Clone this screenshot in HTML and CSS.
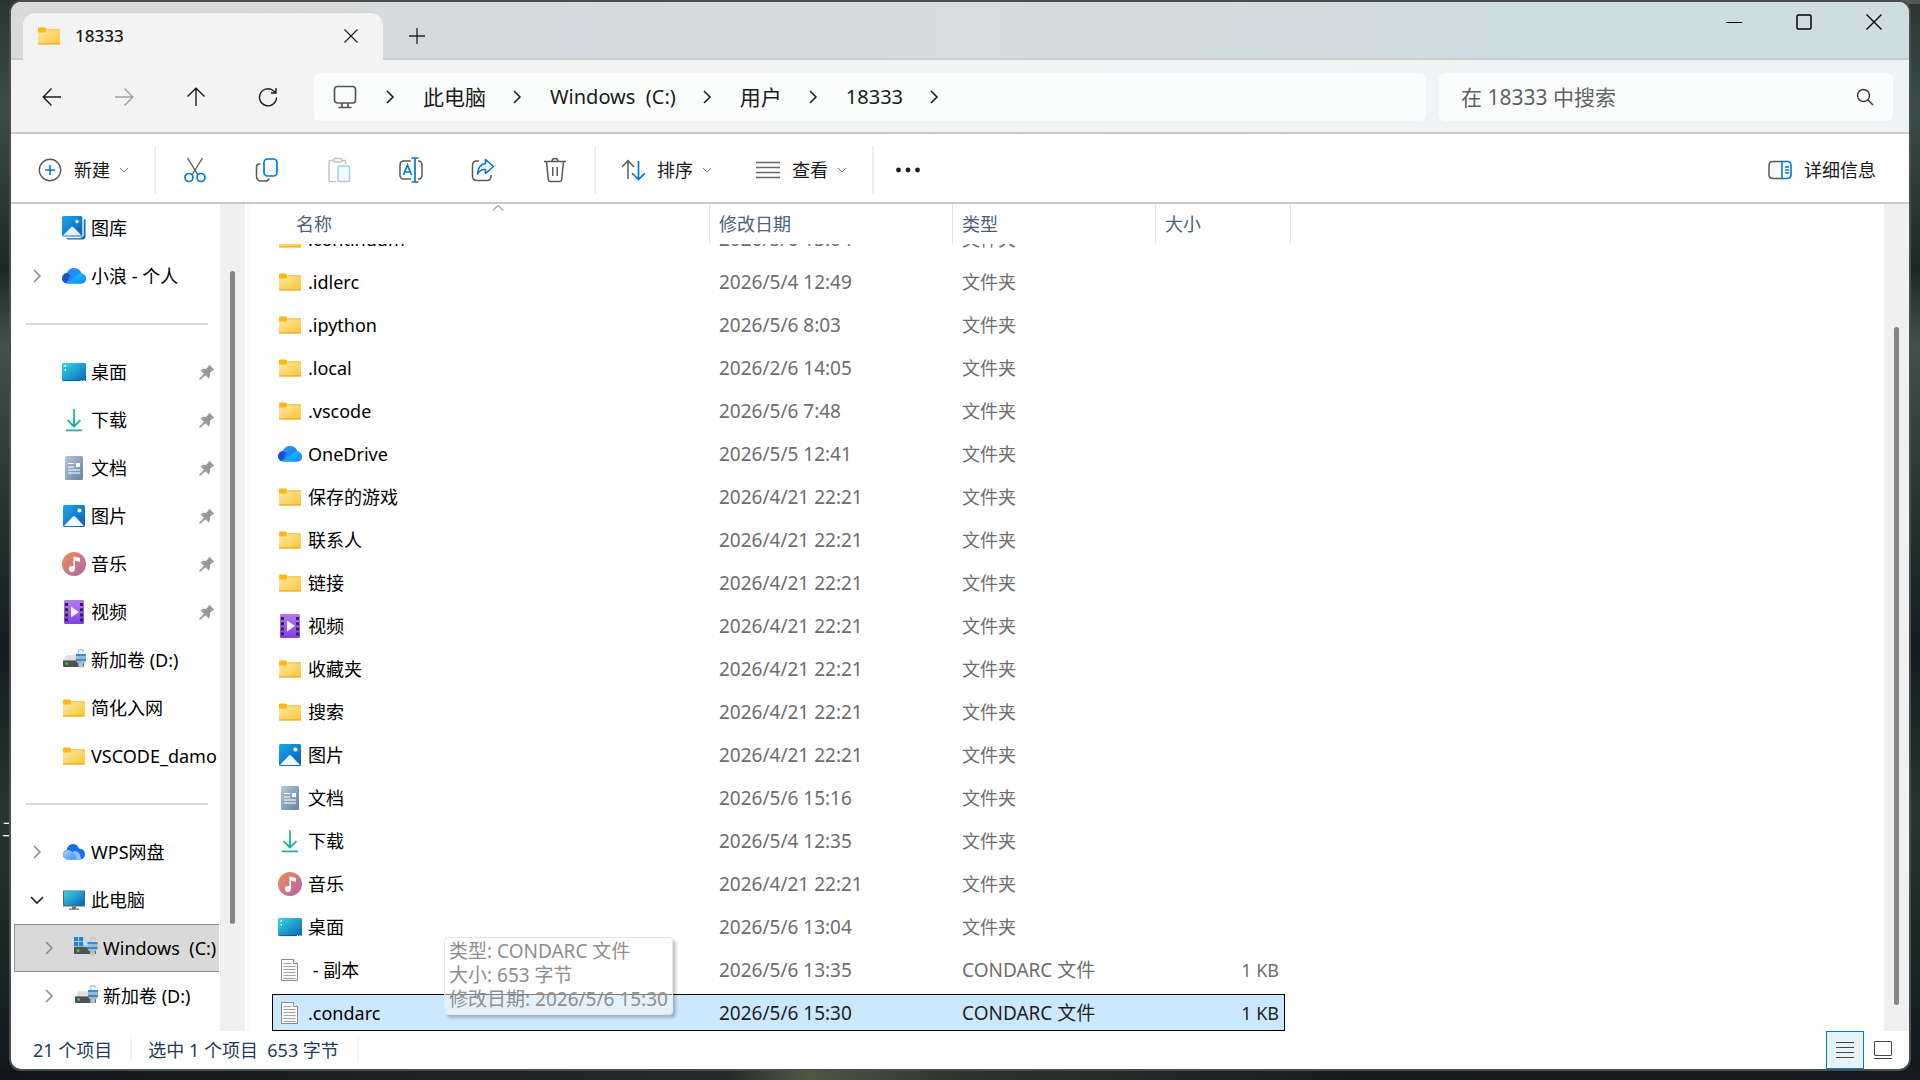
FILE: index.html
```html
<!DOCTYPE html>
<html lang="zh-CN">
<head>
<meta charset="utf-8">
<title>18333</title>
<link rel="stylesheet" href="styles.css">
</head>
<body>
<svg class="sprite" aria-hidden="true">
  <defs>
    <linearGradient id="g-folder" x1="0" y1="0" x2="1" y2="1"><stop offset="0" stop-color="#ffe9a8"/><stop offset="1" stop-color="#fdc634"/></linearGradient>
    <linearGradient id="g-pic" x1="0" y1="0" x2="1" y2="1"><stop offset="0" stop-color="#1ca7ea"/><stop offset="1" stop-color="#0560b4"/></linearGradient>
    <linearGradient id="g-desk" x1="0" y1="0" x2="1" y2="1"><stop offset="0" stop-color="#35dbe6"/><stop offset="1" stop-color="#0b62b8"/></linearGradient>
    <linearGradient id="g-music" x1="0" y1="0" x2="1" y2="1"><stop offset="0" stop-color="#f58e4f"/><stop offset="1" stop-color="#a963b4"/></linearGradient>
    <linearGradient id="g-video" x1="0" y1="0" x2="0" y2="1"><stop offset="0" stop-color="#b57cf0"/><stop offset="1" stop-color="#8440e0"/></linearGradient>
    <linearGradient id="g-doc" x1="0" y1="0" x2="1" y2="1"><stop offset="0" stop-color="#b3c6d9"/><stop offset="1" stop-color="#6482a6"/></linearGradient>
    <linearGradient id="g-down" x1="0" y1="0" x2="0" y2="1"><stop offset="0" stop-color="#33c481"/><stop offset="1" stop-color="#12a5a5"/></linearGradient>
    <linearGradient id="g-cloud" x1="0" y1="0" x2="1" y2="1"><stop offset="0" stop-color="#28b4fb"/><stop offset="1" stop-color="#0a6df5"/></linearGradient>
    <linearGradient id="g-cloud2" x1="0" y1="0" x2="1" y2="1"><stop offset="0" stop-color="#13d2ff"/><stop offset="1" stop-color="#1187fb"/></linearGradient>
    <linearGradient id="g-wps" x1="0" y1="0" x2="1" y2="1"><stop offset="0" stop-color="#a8d4ff"/><stop offset="1" stop-color="#3f92fb"/></linearGradient>
  </defs>
  <symbol id="folder" viewBox="0 0 24 24"><path d="M1 4.500q0-1 1-1h5.500q1 0 1.500 1l.6 1.500V9H1z" fill="#fdb616"/><path d="M1 8.500h7.500L10 5.500h12.500q.5 0 .5.500v14H1z" fill="url(#g-folder)"/><path d="M10 5.800h13" stroke="#efb021" stroke-width=".8"/><path d="M1 20h22" stroke="#e9a21b" stroke-width="1.200"/></symbol>
  <symbol id="picture" viewBox="0 0 24 24"><rect x="1" y="1" width="22" height="22" rx="1.500" fill="url(#g-pic)"/><circle cx="17.500" cy="6.500" r="2.100" fill="#fff"/><path d="M2 22l9-9.500q1-.9 2 0L22 22z" fill="#f2f8ff"/></symbol>
  <symbol id="gallery" viewBox="0 0 24 24"><path d="M4 21.500q0 2 3 2h14q2.500 0 2.500-3V3l-2.500 1v15.500q0 2-2 2z" fill="#1669b8"/><rect x="0" y="0" width="20.500" height="20.500" rx="1.500" fill="url(#g-pic)"/><path d="M3.500 21.700h15" stroke="#fff" stroke-width="1"/><path d="M21.200 3v17" stroke="#fff" stroke-width="1"/><circle cx="15" cy="5.500" r="1.700" fill="#fff"/><path d="M1 19.500l8.300-8.500q1-.9 2 0l8.200 8.500z" fill="#e6f1fc"/></symbol>
  <symbol id="cloud" viewBox="0 0 24 24"><path d="M5 19.500a5 5 0 0 1-4.500-7q1-3 4.200-3.300Q7 4 12.200 4q5.300.3 7 5.300 4.500.8 4.700 5.200-.2 5-5 5z" fill="url(#g-cloud)"/><path d="M5 19.300a5 5 0 0 1-4.500-7q1-3 4.200-3.300 3 .2 4.800 3.200L4 18.500z" fill="#1b4fd0"/><path d="M5 19.500L16 10q1.500-1 3.200-.7 4.500.8 4.700 5.200-.2 5-5 5z" fill="url(#g-cloud2)"/><path d="M4.500 9.200Q7 4 12.200 4q5.300.3 7 5.300-2 0-3.600 1.400L7 18Q5 12 9 9z" fill="#2b83f6" opacity=".6"/></symbol>
  <symbol id="wps" viewBox="0 0 24 24"><path d="M5.500 19.500a5 5 0 0 1-4.500-6q.6-3 3.700-3.500Q5.800 4 11 4q4.500.2 5.900 4.500 5.800.2 6.100 5.700-.2 5-5 5.300z" fill="#176ef0"/><path d="M5 19.500q-4-1-4-5 .6-4 5-4.500 3.500.2 5.500 3.500l3.500 6z" fill="url(#g-wps)"/><path d="M10 12q4-2.500 7 1 2 3 2 6.500h-4.500q-1-5-4.500-7.500z" fill="#8cc4ff"/></symbol>
  <symbol id="desktop" viewBox="0 0 24 24"><rect x="0" y="3" width="24" height="18" rx="1.200" fill="url(#g-desk)"/><path d="M2.500 5h1.500v1.800H2.500zM2.500 9h1.500v1.800H2.500zM19 20h1v1h-1zM21.500 20h1v1h-1z" fill="#fff"/><path d="M1 20.600h17.500" stroke="#0a4e8f" stroke-width=".8"/></symbol>
  <symbol id="download" viewBox="0 0 24 24"><g fill="none" stroke="url(#g-down)" stroke-width="1.800"><path d="M5.500 12l6.500 6.500 6.500-6.500"/><path d="M11.100 1h1.800v16h-1.800z" fill="url(#g-down)" stroke="none"/><path d="M4 21.500h16v1.800H4z" fill="#22b394" stroke="none"/></g></symbol>
  <symbol id="document" viewBox="0 0 24 24"><rect x="3" y="0" width="18" height="24" rx="1.500" fill="url(#g-doc)"/><path d="M6 7.500h6M6 11h6M6 14h12M6 17h12" stroke="#fff" stroke-width="1.200"/><rect x="14" y="7" width="4" height="4" fill="#fff"/></symbol>
  <symbol id="music" viewBox="0 0 24 24"><circle cx="12" cy="12" r="12" fill="url(#g-music)"/><circle cx="9.800" cy="17" r="3" fill="#fff"/><path d="M11.400 17V4.500L18 6v3.800l-5-1.200V17z" fill="#fff"/></symbol>
  <symbol id="video" viewBox="0 0 24 24"><rect x="2" y="0" width="20" height="24" rx="1.200" fill="url(#g-video)"/><path d="M4.500 3v19M19.500 3v19" stroke="#34205e" stroke-width="3" stroke-dasharray="3 2.200"/><path d="M9 6.500v11l8-5.500z" fill="#f3eefc"/></symbol>
  <symbol id="drive" viewBox="0 0 24 24"><path d="M4.500 7h13L22 13H1z" fill="#dfe1e3"/><rect x="1" y="12" width="21" height="7" rx="1" fill="#505356"/><path d="M1 12.500h21" stroke="#8c8f92"/><rect x="3.500" y="14.500" width="2.200" height="2.200" fill="#37e83a"/><path d="M16.500 8V4q0-2.500 2.500-2.500T21.500 4" fill="none" stroke="#bcc7d1" stroke-width="1.500"/><path d="M14 6h10v5q0 5-5 5t-5-5z" fill="#9fb7cb"/><path d="M14 7h10M14 12h10" stroke="#2a91e0" stroke-width="2"/><circle cx="18.800" cy="17" r="2.500" fill="#b5c3ce"/></symbol>
  <symbol id="windrive" viewBox="0 0 24 24"><path d="M0 9h20v3H0z" fill="#c3c5c7"/><rect x="0" y="11" width="22" height="7" rx="1" fill="#505356"/><rect x="3" y="13.500" width="2.200" height="2.200" fill="#37e83a"/><path d="M0 1h4.200v4.200H0zM5 1h4.200v4.200H5zM0 6h4.200v4.200H0zM5 6h4.200v4.200H5z" fill="#1587de"/><path d="M16.500 8V4q0-2.500 2.500-2.500T21.500 4" fill="none" stroke="#bcc7d1" stroke-width="1.500"/><path d="M13.500 6h10v5q0 5-5 5t-5-5z" fill="#9fb7cb"/><path d="M13.500 7h10M13.500 12h10" stroke="#2a91e0" stroke-width="2"/><circle cx="18.500" cy="17" r="2.500" fill="#b5c3ce"/></symbol>
  <symbol id="computer" viewBox="0 0 24 24"><path d="M1 2.500h22v16H1z" fill="#5b6670"/><path d="M2 3.300h20v14H2z" fill="url(#g-desk)"/><path d="M10 18.500h4v2h3v1.300H7v-1.300h3z" fill="#6a737b"/></symbol>
  <symbol id="file" viewBox="0 0 24 24"><path d="M3.500 1.500h12l4 4v17h-16z" fill="#fafafa" stroke="#8b8b8b"/><path d="M15.500 1.500v4h4" fill="#fff" stroke="#8b8b8b"/><path d="M5.500 5.500h8M5.500 8.500h12M5.500 11.500h12M5.500 14.500h12M5.500 17.500h12M5.500 20.500h12" stroke="#a3a3a3"/></symbol>
  <symbol id="pin" viewBox="0 0 16 16"><path d="M10 .5l5.500 5.500-1.800.3-2.700 2.700q.8 3.400-1.400 5.600L6.700 11.200 1 16l-.9-.9L5 9.500 1.500 6.200q2.400-2.200 5.300-1.300L9.700 2.300z" fill="#929ca3"/></symbol>
  <symbol id="right" viewBox="0 0 16 16"><path d="M5 2l6 6-6 6" fill="none" stroke="currentColor" stroke-width="1.500"/></symbol>
  <symbol id="down" viewBox="0 0 16 16"><path d="M2 5l6 6 6-6" fill="none" stroke="currentColor" stroke-width="1.600"/></symbol>
  <symbol id="caret" viewBox="0 0 10 10"><path d="M1 3l4 4 4-4" fill="none" stroke="#777"/></symbol>
</svg>

<div class="desktop">
  <span class="desktop-label">工</span>
  <div class="window">
    <header class="titlebar">
      <div class="tab">
        <svg class="icon"><use href="#folder"/></svg>
        <span class="tab-title">18333</span>
        <button class="tab-close" aria-label="关闭标签页"><svg width="16" height="16" fill="none" stroke="#222" stroke-width="1.200"><path d="M1.500 1.500l13 13M14.500 1.500l-13 13"/></svg></button>
      </div>
      <button class="new-tab" aria-label="新标签页"><svg width="16" height="16" stroke="#222" stroke-width="1.300"><path d="M8 0v16M0 8h16"/></svg></button>
      <div class="controls">
        <button aria-label="最小化"><svg width="16" height="16" fill="none" stroke="#000"><path d="M0 8.500h16"/></svg></button>
        <button aria-label="最大化"><svg width="16" height="16" fill="none" stroke="#000" stroke-width="1.500"><rect x="1" y="1" width="14" height="14" rx="1.500"/></svg></button>
        <button aria-label="关闭"><svg width="16" height="16" fill="none" stroke="#000" stroke-width="1.300"><path d="M.5.5l15 15M15.500.5l-15 15"/></svg></button>
      </div>
    </header>

    <nav class="navbar" aria-label="导航">
      <div class="nav-buttons">
        <button aria-label="后退"><svg width="20" height="20" fill="none" stroke="#1c1c1c" stroke-width="1.400"><path d="M19 10H1.500M9.500 1.500L1.200 10l8.300 8.500"/></svg></button>
        <button aria-label="前进" disabled><svg width="20" height="20" fill="none" stroke="#a0a0a0" stroke-width="1.400"><path d="M1 10h17.500M10.500 1.500l8.300 8.500-8.300 8.500"/></svg></button>
        <button aria-label="向上"><svg width="20" height="20" fill="none" stroke="#1c1c1c" stroke-width="1.400"><path d="M10 19V1.500M1.500 9.500L10 1.200l8.500 8.300"/></svg></button>
        <button aria-label="刷新"><svg width="20" height="20" fill="none" stroke="#1c1c1c" stroke-width="1.400"><path d="M18.500 10.500A8.500 8.500 0 1 1 16 4.300l1.500 1.500M18 1v5h-5"/></svg></button>
      </div>
      <ol class="address">
        <li><svg width="24" height="24" fill="none" stroke="#555" stroke-width="1.700"><rect x="1.500" y="1.500" width="21" height="16.500" rx="3"/><path d="M9 18v4M15 18v4M5.500 22.500h13"/></svg></li>
        <li><svg class="chevron"><use href="#right"/></svg><a href="#">此电脑</a></li>
        <li><svg class="chevron"><use href="#right"/></svg><a href="#" class="latin">Windows&nbsp; (C:)</a></li>
        <li><svg class="chevron"><use href="#right"/></svg><a href="#">用户</a></li>
        <li><svg class="chevron"><use href="#right"/></svg><a href="#" class="latin">18333</a></li>
        <li><svg class="chevron"><use href="#right"/></svg></li>
      </ol>
      <label class="search">
        <input type="text" placeholder="在 18333 中搜索" aria-label="搜索">
        <svg width="18" height="18" fill="none" stroke="#333" stroke-width="1.400"><circle cx="7.500" cy="7.500" r="6"/><path d="M12 12l5 5"/></svg>
      </label>
    </nav>

    <div class="toolbar" role="toolbar">
      <button class="command"><svg width="24" height="24" fill="none" stroke="#5a5a5a" stroke-width="1.400"><circle cx="12" cy="12" r="10.700"/><path d="M12 7v10M7 12h10" stroke="#0078d7" stroke-width="1.600"/></svg><span>新建</span><svg class="caret"><use href="#caret"/></svg></button>
      <span class="separator"></span>
      <button class="tool" aria-label="剪切"><svg width="24" height="26" fill="none" stroke="#5a5a5a" stroke-width="1.400"><path d="M4.500 1l10.500 17M19.500 1L9 18"/><g stroke="#0078d7" stroke-width="1.700"><circle cx="6" cy="20.500" r="4"/><circle cx="18" cy="20.500" r="4"/></g></svg></button>
      <button class="tool" aria-label="复制"><svg width="24" height="26" fill="none" stroke="#5a5a5a" stroke-width="1.500"><path d="M5.500 7H4.500Q1.500 7 1.500 10v9q0 5 5 5h4q3 0 3.500-2.500"/><rect x="9" y="2" width="13" height="17" rx="3.500" stroke="#0078d7" stroke-width="1.700" fill="#f5faff"/></svg></button>
      <button class="tool" aria-label="粘贴" disabled><svg width="24" height="26" fill="none" stroke="#c3c3c3" stroke-width="1.500"><path d="M7 3.500H3.500Q2 3.500 2 5v18q0 1.500 1.500 1.500H9M15 3.500h3.500V7"/><rect x="6.500" y="1.500" width="8.500" height="3.500" rx="1.700"/><rect x="11" y="9" width="11.500" height="15.500" rx="1.500" stroke="#9fcdf2" fill="#f5faff"/></svg></button>
      <button class="tool" aria-label="重命名"><svg width="26" height="26" fill="none" stroke="#5a5a5a" stroke-width="1.500"><path d="M13 4H6Q2 4 2 8v10q0 4 4 4h7M20 4q4 0 4 4v10q0 4-4 4"/><path d="M5.500 18L9.500 8l4 10M7 15h5M17 1v24M13.500 1h7M13.500 25h7" stroke="#0078d7" stroke-width="1.700"/></svg></button>
      <button class="tool" aria-label="共享"><svg width="24" height="26" fill="none" stroke="#5a5a5a" stroke-width="1.500"><path d="M8 4H6Q1.500 4 1.500 8.500V19q0 4.500 4.500 4.500h9.500Q20 23.500 20 19v-1"/><path d="M14.500 2.500L22.500 9.500l-8 7v-4Q9.500 12 6.500 17 7 7.500 14.500 6.500z" stroke="#0078d7" stroke-width="1.600" stroke-linejoin="round"/></svg></button>
      <button class="tool" aria-label="删除"><svg width="24" height="26" fill="none" stroke="#5a5a5a" stroke-width="1.500"><path d="M1 4.500h22M9 4.500q0-3 3-3t3 3M3.500 4.500l1.800 18q.2 2 2 2h9.400q1.800 0 2-2l1.800-18M9.800 10v9M14.200 10v9"/></svg></button>
      <span class="separator"></span>
      <button class="command"><svg width="24" height="24" fill="none" stroke="#5a5a5a" stroke-width="1.500"><path d="M7 21V3M1 9l6-6.500L13 9"/><path d="M17.500 3v18M11 15l6.500 6.500L24 15" stroke="#0078d7" stroke-width="1.700"/></svg><span>排序</span><svg class="caret"><use href="#caret"/></svg></button>
      <button class="command"><svg width="24" height="24" stroke="#6a6a6a" stroke-width="1.500"><path d="M0 4.500h24M0 9.500h24M0 14.500h24M0 19.500h24"/></svg><span>查看</span><svg class="caret"><use href="#caret"/></svg></button>
      <span class="separator"></span>
      <button class="more" aria-label="更多"><svg width="24" height="6" fill="#1c1c1c"><circle cx="2.500" cy="3" r="2.400"/><circle cx="12" cy="3" r="2.400"/><circle cx="21.500" cy="3" r="2.400"/></svg></button>
      <button class="command details"><svg width="24" height="20" fill="none" stroke="#5a5a5a" stroke-width="1.500"><path d="M14 1.500H5Q1 1.500 1 5.500v9q0 4 4 4h9" fill="#f8f8f8"/><path d="M14 1.500h5q4 0 4 4v9q0 4-4 4h-5zM17 7h4M17 10h4M17 13h4" stroke="#0078d7" stroke-width="1.600"/></svg><span>详细信息</span></button>
    </div>

    <main class="content">
      <aside class="sidebar">
        <ul class="tree">
          <li class="node"><i class="toggle"></i><svg class="icon"><use href="#gallery"/></svg><span>图库</span></li>
          <li class="node"><svg class="toggle"><use href="#right"/></svg><svg class="icon"><use href="#cloud"/></svg><span>小浪 - 个人</span></li>
          <li class="divider"></li>
          <li class="node"><i class="toggle"></i><svg class="icon"><use href="#desktop"/></svg><span>桌面</span><svg class="pin"><use href="#pin"/></svg></li>
          <li class="node"><i class="toggle"></i><svg class="icon"><use href="#download"/></svg><span>下载</span><svg class="pin"><use href="#pin"/></svg></li>
          <li class="node"><i class="toggle"></i><svg class="icon"><use href="#document"/></svg><span>文档</span><svg class="pin"><use href="#pin"/></svg></li>
          <li class="node"><i class="toggle"></i><svg class="icon"><use href="#picture"/></svg><span>图片</span><svg class="pin"><use href="#pin"/></svg></li>
          <li class="node"><i class="toggle"></i><svg class="icon"><use href="#music"/></svg><span>音乐</span><svg class="pin"><use href="#pin"/></svg></li>
          <li class="node"><i class="toggle"></i><svg class="icon"><use href="#video"/></svg><span>视频</span><svg class="pin"><use href="#pin"/></svg></li>
          <li class="node"><i class="toggle"></i><svg class="icon"><use href="#drive"/></svg><span>新加卷 (D:)</span></li>
          <li class="node"><i class="toggle"></i><svg class="icon"><use href="#folder"/></svg><span>简化入网</span></li>
          <li class="node"><i class="toggle"></i><svg class="icon"><use href="#folder"/></svg><span>VSCODE_damo</span></li>
          <li class="divider"></li>
          <li class="node"><svg class="toggle"><use href="#right"/></svg><svg class="icon"><use href="#wps"/></svg><span>WPS网盘</span></li>
          <li class="node"><svg class="toggle open"><use href="#down"/></svg><svg class="icon"><use href="#computer"/></svg><span>此电脑</span></li>
          <li class="node child current"><svg class="toggle"><use href="#right"/></svg><svg class="icon"><use href="#windrive"/></svg><span>Windows&nbsp; (C:)</span></li>
          <li class="node child"><svg class="toggle"><use href="#right"/></svg><svg class="icon"><use href="#drive"/></svg><span>新加卷 (D:)</span></li>
        </ul>
      </aside>
      <div class="scrollbar side-scroll"><div class="thumb"></div></div>

      <section class="files">
        <div class="columns">
          <button>名称<svg class="sort-mark" width="12" height="7" fill="none" stroke="#666"><path d="M1 6.500l5-5 5 5"/></svg></button>
          <button>修改日期</button>
          <button>类型</button>
          <button>大小</button>
        </div>
        <div class="viewport">
          <table class="list">
            <colgroup><col class="c-name"><col class="c-date"><col class="c-type"><col class="c-size"></colgroup>
            <tbody>
              <tr><td><div class="name"><svg class="icon"><use href="#folder"/></svg>.continuum</div></td><td>2026/5/6 13:04</td><td class="kind">文件夹</td><td></td></tr>
              <tr><td><div class="name"><svg class="icon"><use href="#folder"/></svg>.idlerc</div></td><td>2026/5/4 12:49</td><td class="kind">文件夹</td><td></td></tr>
              <tr><td><div class="name"><svg class="icon"><use href="#folder"/></svg>.ipython</div></td><td>2026/5/6 8:03</td><td class="kind">文件夹</td><td></td></tr>
              <tr><td><div class="name"><svg class="icon"><use href="#folder"/></svg>.local</div></td><td>2026/2/6 14:05</td><td class="kind">文件夹</td><td></td></tr>
              <tr><td><div class="name"><svg class="icon"><use href="#folder"/></svg>.vscode</div></td><td>2026/5/6 7:48</td><td class="kind">文件夹</td><td></td></tr>
              <tr><td><div class="name"><svg class="icon"><use href="#cloud"/></svg>OneDrive</div></td><td>2026/5/5 12:41</td><td class="kind">文件夹</td><td></td></tr>
              <tr><td><div class="name"><svg class="icon"><use href="#folder"/></svg>保存的游戏</div></td><td>2026/4/21 22:21</td><td class="kind">文件夹</td><td></td></tr>
              <tr><td><div class="name"><svg class="icon"><use href="#folder"/></svg>联系人</div></td><td>2026/4/21 22:21</td><td class="kind">文件夹</td><td></td></tr>
              <tr><td><div class="name"><svg class="icon"><use href="#folder"/></svg>链接</div></td><td>2026/4/21 22:21</td><td class="kind">文件夹</td><td></td></tr>
              <tr><td><div class="name"><svg class="icon"><use href="#video"/></svg>视频</div></td><td>2026/4/21 22:21</td><td class="kind">文件夹</td><td></td></tr>
              <tr><td><div class="name"><svg class="icon"><use href="#folder"/></svg>收藏夹</div></td><td>2026/4/21 22:21</td><td class="kind">文件夹</td><td></td></tr>
              <tr><td><div class="name"><svg class="icon"><use href="#folder"/></svg>搜索</div></td><td>2026/4/21 22:21</td><td class="kind">文件夹</td><td></td></tr>
              <tr><td><div class="name"><svg class="icon"><use href="#picture"/></svg>图片</div></td><td>2026/4/21 22:21</td><td class="kind">文件夹</td><td></td></tr>
              <tr><td><div class="name"><svg class="icon"><use href="#document"/></svg>文档</div></td><td>2026/5/6 15:16</td><td class="kind">文件夹</td><td></td></tr>
              <tr><td><div class="name"><svg class="icon"><use href="#download"/></svg>下载</div></td><td>2026/5/4 12:35</td><td class="kind">文件夹</td><td></td></tr>
              <tr><td><div class="name"><svg class="icon"><use href="#music"/></svg>音乐</div></td><td>2026/4/21 22:21</td><td class="kind">文件夹</td><td></td></tr>
              <tr><td><div class="name"><svg class="icon"><use href="#desktop"/></svg>桌面</div></td><td>2026/5/6 13:04</td><td class="kind">文件夹</td><td></td></tr>
              <tr><td><div class="name"><svg class="icon"><use href="#file"/></svg>&nbsp;- 副本</div></td><td>2026/5/6 13:35</td><td>CONDARC 文件</td><td class="size">1 KB</td></tr>
              <tr class="selected"><td><div class="name"><svg class="icon"><use href="#file"/></svg>.condarc
                <div class="tooltip" role="tooltip">类型: CONDARC 文件<br>大小: 653 字节<br>修改日期: 2026/5/6 15:30</div></div></td><td>2026/5/6 15:30</td><td>CONDARC 文件</td><td class="size">1 KB</td></tr>
            </tbody>
          </table>
        </div>
      </section>
      <div class="scrollbar main-scroll"><div class="thumb"></div></div>
    </main>

    <footer class="statusbar">
      <span class="status">21 个项目</span>
      <span class="status">选中 1 个项目&nbsp; 653 字节</span>
      <div class="views">
        <button class="view active" aria-label="详细信息视图"><svg width="18" height="18" stroke="#444"><path d="M0 1.500h18M0 6.500h18M0 11.500h18M0 16.500h18"/></svg></button>
        <button class="view" aria-label="大图标视图"><svg width="18" height="18" fill="none" stroke="#444"><rect x=".5" y=".5" width="17" height="14" rx=".5"/><path d="M0 17.500h18"/></svg></button>
      </div>
    </footer>
  </div>
</div>
</body>
</html>
```

FILE: styles.css
```css
* { box-sizing: border-box; }

body {
  margin: 0;
  font-family: "Noto Sans", "Noto Sans CJK SC", sans-serif;
  font-size: 18px;
  line-height: 24px;
  color: #1a1a1a;
  white-space: nowrap;
}

button {
  display: flex;
  align-items: center;
  justify-content: center;
  padding: 0;
  border: 0;
  background: none;
  font: inherit;
  color: inherit;
}

svg { flex: none; display: block; }
ul, ol { margin: 0; padding: 0; list-style: none; }
a { color: inherit; text-decoration: none; }

.sprite { position: absolute; width: 0; height: 0; }
.icon { width: 24px; height: 24px; }

/* Desktop and window frame */
.desktop {
  position: relative;
  height: 100vh;
  padding: 2px 11px 11px;
  overflow: hidden;
  background:
    linear-gradient(90deg, #2c3432, #5f6862 24%, #8a8574 40%, #a09a88 60%, #6a6c60 80%, #4c5a55) top / 100% 4px no-repeat,
    linear-gradient(90deg, #10161a, #1d2624 25%, #222d2b 38%, #4d5a42 42%, #2a3530 50%, #161f20 70%, #141a1d) bottom / 100% 11px no-repeat,
    linear-gradient(180deg, #2b3634, #3b4d49 10%, #1f2827 25%, #46504a 32%, #2c3633 45%, #161c20 60%, #2a3430 75%, #12181c);
}

.desktop-label {
  position: absolute;
  left: 2px;
  top: 817px;
  color: #fff;
}

.window {
  position: relative;
  display: flex;
  flex-direction: column;
  height: 100%;
  overflow: hidden;
  border-radius: 10px;
  background: #fff;
  box-shadow: 0 0 0 2px #484d4d;
}

/* Title bar */
.titlebar {
  display: flex;
  flex: none;
  height: 58px;
  padding-left: 12px;
  background: linear-gradient(90deg, #dadada 10%, #d5dbde 30%, #d8dbdb 45%, #d3dcde 65%, #cddde2 80%);
  box-shadow: inset 0 -2px #c7cdd0;
}

.tab {
  position: relative;
  display: flex;
  align-items: center;
  width: 360px;
  margin-top: 11px;
  padding: 0 24px 2px 14px;
  border-radius: 12px 12px 0 0;
  background: #f3f3f3;
  box-shadow: 0 -1px 1px #d0d0d0;
}

.tab-title { margin-left: 14px; font-size: 17px; font-weight: 500; }
.tab-close { margin-left: auto; }
.new-tab { width: 68px; margin-top: 11px; padding-bottom: 2px; }

.controls { display: flex; margin-left: auto; }
.controls button { width: 70px; height: 40px; }

/* Navigation bar */
.navbar {
  display: flex;
  flex: none;
  align-items: center;
  height: 74px;
  padding: 2px 16px 0 5px;
  border-bottom: 2px solid #c3cbce;
  background: linear-gradient(90deg, #f3f3f3 25%, #eff3f5);
}

.nav-buttons { display: flex; width: 298px; }
.nav-buttons button { width: 72px; height: 48px; }

.address {
  display: flex;
  flex: 1 1 0;
  align-items: center;
  height: 48px;
  padding-left: 19px;
  border-radius: 6px;
  background: #fbfdfc;
  font-size: 21px;
}

.address li { display: flex; align-items: center; }
.address li:first-child { margin-right: 2px; }
.address .latin { font-size: 20px; }
.chevron { width: 16px; height: 16px; margin: 0 25px 0 23px; }

.search {
  display: flex;
  align-items: center;
  width: 454px;
  height: 48px;
  margin-left: 13px;
  padding: 0 19px 0 22px;
  border-radius: 6px;
  background: #fbfdfc;
}

.search input {
  flex: 1;
  min-width: 0;
  padding: 0;
  border: 0;
  outline: 0;
  background: none;
  font: inherit;
  font-size: 21px;
}
.search input::placeholder { color: #626262; opacity: 1; }

/* Command bar */
.toolbar {
  display: flex;
  flex: none;
  align-items: center;
  height: 70px;
  padding: 3px 11px 0 5px;
  border-bottom: 2px solid #c3cbce;
}

.command { gap: 12px; height: 48px; padding: 0 22px; }
.caret { width: 10px; height: 10px; margin-left: -3px; }
.tool { width: 72px; height: 48px; }
.more { width: 62px; height: 48px; }
.details { margin-left: auto; }
.separator { width: 2px; height: 48px; margin: 0 3px; background: #efefef; }

/* Content */
.content { display: flex; flex: 1; min-height: 0; }

.sidebar { width: 209px; overflow: hidden; color: #000; }
.node { display: flex; align-items: center; height: 48px; padding-left: 18px; overflow: hidden; }
.toggle { flex: none; width: 16px; height: 16px; margin-right: 17px; color: #8a8a8a; }
.toggle.open { color: #222; }
.node .icon { margin-right: 5px; }
.child { padding-left: 30px; }
.current { margin: 0 1px 0 3px; padding-left: 26px; border: 1px solid #919191; border-right: 0; background: #d9d9d9; }
.pin { width: 16px; height: 16px; margin: 0 5px 0 auto; }
.divider { height: 48px; padding: 23px 12px 23px 15px; background: #d8d8d8 content-box; }

.scrollbar { flex: none; width: 25px; background: #f0f0f0; }
.thumb { width: 5px; margin: 0 auto; border-radius: 3px; background: #858585; }
.side-scroll { padding-top: 67px; }
.side-scroll .thumb { height: calc(100% - 107px); }
.main-scroll { padding-top: 123px; }
.main-scroll .thumb { height: calc(100% - 26px); }

.files {
  display: flex;
  flex: 1;
  flex-direction: column;
  min-width: 0;
  margin-left: 2px;
  padding-left: 23px;
  border-left: 2px solid #f7f7f7;
}

.columns { display: grid; flex: none; grid-template-columns: 438px 243px 203px 135px; height: 40px; }
.columns button {
  position: relative;
  justify-content: flex-start;
  padding: 0 0 0 9px;
  border-right: 1px solid #e2e2e2;
  color: #4c607a;
}
.columns button:first-child { padding-left: 24px; }
.sort-mark { position: absolute; left: 220px; top: 0; }

.viewport { flex: 1; min-height: 0; overflow: hidden; }

/* The list is scrolled so that its first row is partly under the header */
.list {
  width: 1013px;
  margin-top: -30px;
  table-layout: fixed;
  border-collapse: separate;
  border-spacing: 0 6px;
  font-size: 19px;
  color: #6d6d6d;
}
.c-name { width: 438px; }
.c-date { width: 243px; }
.c-type { width: 203px; }
.c-size { width: 129px; }

.list td { height: 37px; padding: 0 0 0 9px; }
.list td:first-child { padding-left: 6px; }
.list .kind { font-size: 18px; }
.list .size { padding-right: 6px; font-size: 18px; text-align: right; }
.name { position: relative; display: flex; align-items: center; gap: 6px; font-size: 18px; color: #000; }
.selected { outline: 1px solid #000; outline-offset: -1px; background: #cce8ff; color: #1f1f1f; }

.tooltip {
  position: absolute;
  left: 166px;
  bottom: 10px;
  width: 229px;
  padding: 1px 4px 3px;
  border: 1px solid #e6e6e6;
  border-radius: 4px;
  background: rgba(252, 252, 252, .5);
  box-shadow: 3px 3px 3px rgba(0, 0, 0, .22);
  font-size: 19px;
  color: #8f8f8f;
}

/* Status bar */
.statusbar { display: flex; flex: none; align-items: center; height: 38px; padding-left: 22px; color: #1f3a5f; }
.status { height: 24px; padding-right: 18px; margin-right: 16px; border-right: 2px solid #f3f3f3; }
.views { display: flex; margin-left: auto; padding-right: 7px; }
.view { width: 38px; height: 38px; }
.view.active { border: 1px solid #0078d7; background: #e5f3fb; }
```
